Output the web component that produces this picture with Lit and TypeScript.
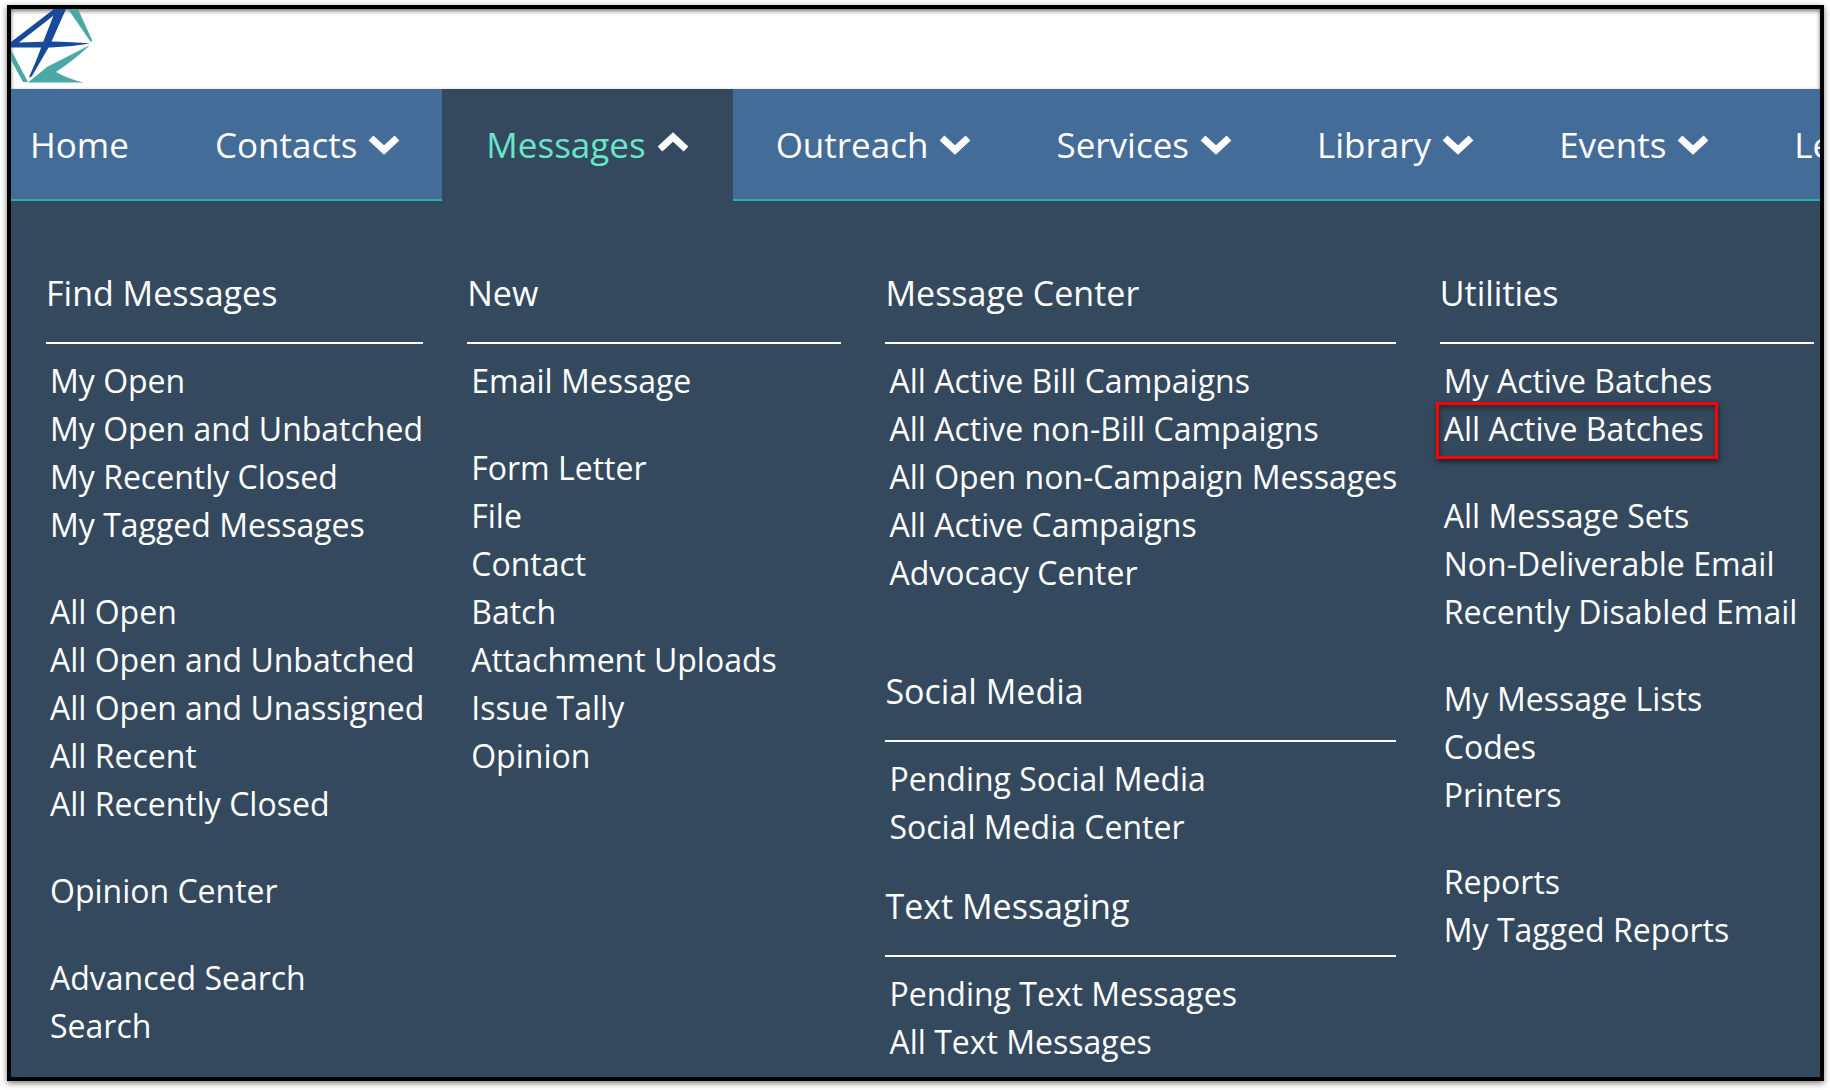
import { LitElement, html, css, svg } from "lit";
import { customElement, property } from "lit/decorators.js";
import { classMap } from "lit/directives/class-map.js";

interface NavItem {
  label: string;
  menu: boolean;
  open?: boolean;
}

interface Section {
  title: string;
  groups: string[][];
}

const NAV: NavItem[] = [
  { label: "Home", menu: false },
  { label: "Contacts", menu: true },
  { label: "Messages", menu: true, open: true },
  { label: "Outreach", menu: true },
  { label: "Services", menu: true },
  { label: "Library", menu: true },
  { label: "Events", menu: true },
  { label: "Le", menu: true },
];

const HIGHLIGHTED = "All Active Batches";

const COLUMNS: Section[][] = [
  [
    {
      title: "Find Messages",
      groups: [
        ["My Open", "My Open and Unbatched", "My Recently Closed", "My Tagged Messages"],
        ["All Open", "All Open and Unbatched", "All Open and Unassigned", "All Recent", "All Recently Closed"],
        ["Opinion Center"],
        ["Advanced Search", "Search"],
      ],
    },
  ],
  [
    {
      title: "New",
      groups: [
        ["Email Message"],
        ["Form Letter", "File", "Contact", "Batch", "Attachment Uploads", "Issue Tally", "Opinion"],
      ],
    },
  ],
  [
    {
      title: "Message Center",
      groups: [
        [
          "All Active Bill Campaigns",
          "All Active non-Bill Campaigns",
          "All Open non-Campaign Messages",
          "All Active Campaigns",
          "Advocacy Center",
        ],
        [],
      ],
    },
    { title: "Social Media", groups: [["Pending Social Media", "Social Media Center"]] },
    { title: "Text Messaging", groups: [["Pending Text Messages", "All Text Messages"]] },
  ],
  [
    {
      title: "Utilities",
      groups: [
        ["My Active Batches", "All Active Batches"],
        ["All Message Sets", "Non-Deliverable Email", "Recently Disabled Email"],
        ["My Message Lists", "Codes", "Printers"],
        ["Reports", "My Tagged Reports"],
      ],
    },
  ],
];

@customElement("brand-logo")
export class BrandLogo extends LitElement {
  static styles = css`
    :host {
      display: block;
    }
    .mark {
      display: block;
      width: 84px;
      height: 80px;
    }
  `;

  render() {
    return html`
      <svg class="mark" viewBox="0 0 84 80" role="img" aria-label="Company logo">
        <g fill="#4ba8a5">
          <path d="M57 0H67L81 31Q81 34 79 32Z" />
          <path d="M79 36Q62 52 45 63Q57 70 73 73.500H17L36 58Z" />
          <path d="M0 41L17 73H12L0 51Z" />
        </g>
        <g fill="#18499b">
          <path d="M45 0H55L39 36L21 67Q18 70 18.500 67Q27 48 31 36Z" />
          <path d="M0 33L43 0H51L8 33.500L40 32.500Q62 33 79 34.500Q60 38 40 38.500H0Z" />
        </g>
      </svg>
    `;
  }
}

@customElement("nav-bar")
export class NavBar extends LitElement {
  @property({ attribute: false }) items: NavItem[] = [];

  static styles = css`
    :host {
      display: block;
      overflow: hidden;
      background: #446c98;
    }
    .bar {
      display: flex;
      height: 112px;
      padding-left: 19px;
      box-shadow: inset 0 -2px #1fb89c;
    }
    .tab {
      box-sizing: border-box;
      flex: none;
      display: flex;
      align-items: center;
      gap: 11px;
      padding: 0 42px 0 43px;
      border: 0;
      background: none;
      color: #fff;
      font: 35px/48px "Open Sans", "Noto Sans", sans-serif;
      text-decoration: none;
      cursor: pointer;
    }
    .plain {
      padding-left: 0;
      padding-right: 43px;
    }
    .open {
      padding: 0 44px;
      background: #34495e;
      color: #68e6ca;
    }
    .chevron {
      width: 32px;
      height: 22px;
      fill: none;
      stroke: #fff;
      stroke-width: 7px;
    }
  `;

  private renderItem(item: NavItem) {
    if (!item.menu) {
      return html`<a class="tab plain" href="#home">${item.label}</a>`;
    }
    const points = item.open ? "3,15 16,3 29,15" : "3,4 16,16 29,4";
    return html`
      <button class=${classMap({ tab: true, open: !!item.open })} type="button" aria-expanded=${item.open ? "true" : "false"}>
        <span>${item.label}</span>
        <svg class="chevron" viewBox="0 0 32 22" overflow="visible" aria-hidden="true">${svg`<polyline points=${points} />`}</svg>
      </button>
    `;
  }

  render() {
    return html`<nav class="bar" aria-label="Main">${this.items.map((item) => this.renderItem(item))}</nav>`;
  }
}

@customElement("menu-section")
export class MenuSection extends LitElement {
  @property({ attribute: false }) section!: Section;

  static styles = css`
    :host {
      display: block;
      color: #fff;
    }
    .title {
      margin: 0 0 13px;
      padding-bottom: 25px;
      border-bottom: 2px solid #fff;
      font: 34px/48px "Open Sans", "Noto Sans", sans-serif;
    }
    .groups {
      display: flex;
      flex-direction: column;
      gap: 39px;
    }
    .group {
      margin: 0;
      padding: 0 0 0 4px;
      list-style: none;
      font: 32px/48px "Open Sans", "Noto Sans", sans-serif;
      white-space: nowrap;
    }
    .link {
      position: relative;
      color: inherit;
      text-decoration: none;
    }
    .marked::after {
      content: "";
      position: absolute;
      inset: -5px -14px -9px -8px;
      border: 3px solid #f00;
      box-shadow: 1px 3px 5px rgb(0 0 0 / 50%), inset 1px 3px 5px rgb(0 0 0 / 40%);
    }
  `;

  render() {
    return html`
      <h2 class="title">${this.section.title}</h2>
      <div class="groups">
        ${this.section.groups.map(
          (group) => html`
            <ul class="group">
              ${group.map(
                (label) => html`<li>
                  <a class=${classMap({ link: true, marked: label === HIGHLIGHTED })} href="#menu">${label}</a>
                </li>`,
              )}
            </ul>
          `,
        )}
      </div>
    `;
  }
}

@customElement("app-root")
export class AppRoot extends LitElement {
  static styles = css`
    :host {
      display: block;
      box-sizing: border-box;
      min-height: 100vh;
      padding: 5px 6px 9px 7px;
      background: #fff;
    }
    .frame {
      box-sizing: border-box;
      min-height: calc(100vh - 14px);
      display: flex;
      flex-direction: column;
      border: 4px solid #000;
      box-shadow: 0 2px 6px rgb(0 0 0 / 55%);
      overflow: hidden;
    }
    .masthead {
      height: 80px;
      box-shadow: inset 0 2px 4px rgb(0 0 0 / 55%);
    }
    .mega {
      flex: 1;
      display: grid;
      grid-template-columns: 377fr 374fr 510fr 374fr;
      gap: 44px;
      padding: 68px 6px 8px 35px;
      background: #34495e;
    }
    .column {
      display: flex;
      flex-direction: column;
      gap: 31px;
      min-width: 0;
    }
  `;

  render() {
    return html`
      <div class="frame">
        <header class="masthead"><brand-logo></brand-logo></header>
        <nav-bar .items=${NAV}></nav-bar>
        <main class="mega">
          ${COLUMNS.map(
            (column) => html`
              <div class="column">
                ${column.map((section) => html`<menu-section .section=${section}></menu-section>`)}
              </div>
            `,
          )}
        </main>
      </div>
    `;
  }
}
